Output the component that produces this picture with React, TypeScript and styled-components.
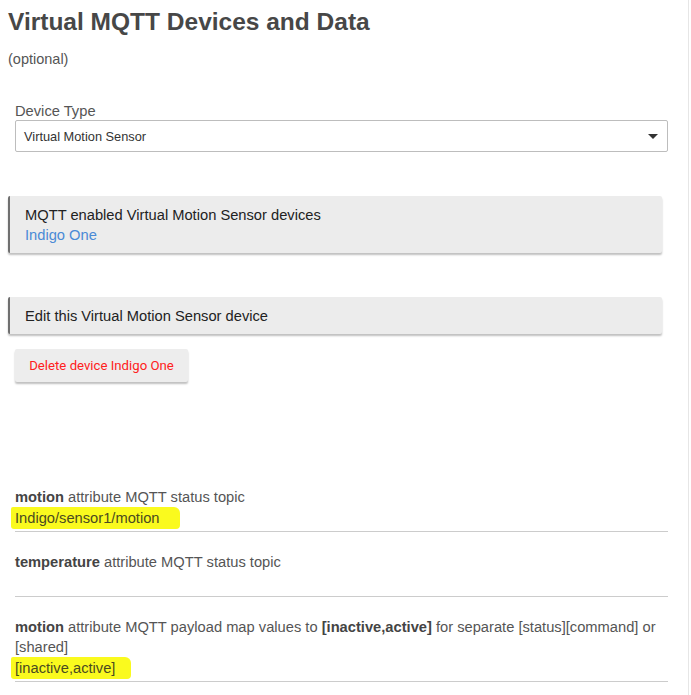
import React from "react";
import styled, { createGlobalStyle } from "styled-components";

const GlobalStyle = createGlobalStyle`
  html, body { margin: 0; padding: 0; background: #fff; }
  body { font-family: "Liberation Sans", Arial, sans-serif; }
`;

const Page = styled.div`
  width: 689px;
  min-height: 695px;
  border-right: 1px solid #e6e6e6;
  box-sizing: border-box;
  padding: 7px 0 0 8px;
`;

const Title = styled.h1`
  margin: 0;
  font-size: 24.5px;
  line-height: 30px;
  font-weight: 700;
  color: #474747;
`;

const Optional = styled.div`
  margin-top: 13px;
  font-size: 14.5px;
  line-height: 18px;
  color: #555;
`;

const Field = styled.div`
  margin: 34px 0 0 7px;
  width: 653px;
`;

const Label = styled.div`
  font-size: 14.7px;
  line-height: 18px;
  color: #555;
  margin-bottom: 0;
`;

const Select = styled.div`
  height: 32px;
  box-sizing: border-box;
  border: 1px solid #bdbdbd;
  border-radius: 2px;
  display: flex;
  align-items: center;
  justify-content: space-between;
  padding: 0 9px 0 8px;
  font-size: 12.8px;
  color: #333;
`;

const Arrow = styled.span`
  width: 0;
  height: 0;
  border-left: 5px solid transparent;
  border-right: 5px solid transparent;
  border-top: 5px solid #333;
`;

const Card = styled.div<{ $top: number }>`
  margin-top: ${(p) => p.$top}px;
  width: 654px;
  box-sizing: border-box;
  background: #ececec;
  border-left: 2px solid #6f6f6f;
  border-radius: 2px;
  box-shadow: 0 2px 2px rgba(0, 0, 0, 0.25);
  padding: 9px 15px 8px;
  font-size: 14.7px;
  line-height: 20px;
  color: #222;
`;

const Link = styled.div`
  color: #4a8ad6;
`;

const Button = styled.div`
  margin: 15px 0 0 7px;
  width: 173px;
  height: 33px;
  box-sizing: border-box;
  display: flex;
  align-items: center;
  justify-content: center;
  background: #ededed;
  border-radius: 2px;
  box-shadow: 0 2px 2px rgba(0, 0, 0, 0.25);
  font-family: Roboto, "Liberation Sans", sans-serif;
  font-weight: 400;
  font-size: 13.2px;
  color: #ff2020;
`;

const Attributes = styled.div`
  margin: 105px 0 0 7px;
  width: 653px;
`;

const Row = styled.div`
  padding-top: 20px;
  &:first-child { padding-top: 0; }
  border-bottom: 1px solid #cccccc;
`;

const RowLabel = styled.div`
  font-size: 14.7px;
  line-height: 20px;
  color: #555;
  b { color: #444; }
`;

const RowValue = styled.div`
  height: 22px;
  font-size: 14.7px;
  line-height: 22px;
  color: #555;
  margin-bottom: 2px;
`;

const Marker = styled.span<{ $right: number }>`
  display: inline-block;
  background: #fafa1e;
  color: #4a4a20;
  margin-left: -4px;
  padding: 0 ${(p) => p.$right}px 0 4px;
  border-radius: 2px 6px 4px 3px;
`;

export default function App() {
  return (
    <>
      <GlobalStyle />
      <Page>
        <Title>Virtual MQTT Devices and Data</Title>
        <Optional>(optional)</Optional>
        <Field>
          <Label>Device Type</Label>
          <Select>
            <span>Virtual Motion Sensor</span>
            <Arrow />
          </Select>
        </Field>
        <Card $top={44}>
          <div>MQTT enabled Virtual Motion Sensor devices</div>
          <Link>Indigo One</Link>
        </Card>
        <Card $top={44}>
          <div>Edit this Virtual Motion Sensor device</div>
        </Card>
        <Button>Delete device Indigo One</Button>
        <Attributes>
          <Row>
            <RowLabel>
              <b>motion</b> attribute MQTT status topic
            </RowLabel>
            <RowValue>
              <Marker $right={20}>Indigo/sensor1/motion</Marker>
            </RowValue>
          </Row>
          <Row>
            <RowLabel>
              <b>temperature</b> attribute MQTT status topic
            </RowLabel>
            <RowValue />
          </Row>
          <Row>
            <RowLabel>
              <b>motion</b> attribute MQTT payload map values to <b>[inactive,active]</b> for separate [status][command] or
              <br />
              [shared]
            </RowLabel>
            <RowValue>
              <Marker $right={16}>[inactive,active]</Marker>
            </RowValue>
          </Row>
        </Attributes>
      </Page>
    </>
  );
}
